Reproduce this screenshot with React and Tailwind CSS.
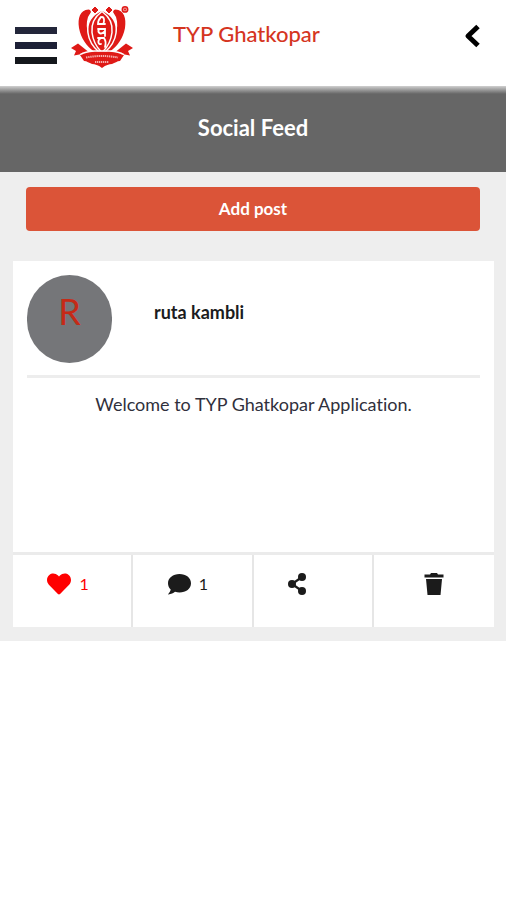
import React, { useState } from 'react';
import { FaHeart } from 'react-icons/fa';

const posts = [
  {
    id: 1,
    author: 'ruta kambli',
    text: 'Welcome to TYP Ghatkopar Application.',
    likes: 1,
    comments: 1,
  },
];

const Logo = () => (
  <svg viewBox="0 0 62 64" className="h-16 w-[62px]" role="img" aria-label="TYP logo">
    {/* side leaves */}
    <path d="M7 38.500L0 43l5 3-2 4.500 8-1.500h40l8 1.500-2-4.500 5-3-7-4.500-10 8H17z" fill="#df1a17" />
    {/* outer petals */}
    <g fill="#df1a17">
      <path d="M17.500 4.500C9 5 6.500 13 8 23c2 10 7 18 16 24l4-1C19 37 13 24 17 12c1-2 2-3 3-5-.5-1.500-1-2.500-2.500-2.500z" />
      <path d="M44.500 4.500C53 5 55.500 13 54 23c-2 10-7 18-16 24l-4-1c9-9 15-22 11-34-1-2-2-3-3-5 .5-1.500 1-2.500 2.500-2.500z" />
    </g>
    {/* inner petals and bud */}
    <path d="M31 5C20 10 15.500 18 17 28c1 8 5 14 11 19h6c6-5 10-11 11-19 1.500-10-3-18-14-23z" fill="#df1a17" stroke="#fff" strokeWidth="1.500" />
    <path d="M31 6.500c-7 5-11 12-10 21 1 8 4 14 9 19h2c5-5 8-11 9-19 1-9-3-16-10-21z" fill="#df1a17" stroke="#fff" strokeWidth="1.500" />
    <path d="M24 2l3 3-3 3-3-3zM38 2l3 3-3 3-3-3z" fill="#df1a17" stroke="#df1a17" />
    {/* ribbon */}
    <path d="M9 50c14-5 30-5 44 0l-4 6c-3 0-5 2-8 3-3 0-6 1-10 4-4-3-7-4-10-4-3-1-5-3-8-3z" fill="#df1a17" />
    <path d="M9 49.500c4-2 9-3 14-3.500h16c5 .5 10 1.500 14 3.500" fill="none" stroke="#fff" strokeWidth="1.300" />
    <path
      d="M30 12c-2 2-3 4-3 7h7M31 12c2 0 3 4 1 7M27 24h7v7M28 24c-2 4 2 6 5 3M27 33h6c2 3 2 6 1 9M30 33c-4 2-3 7 0 6"
      fill="none"
      stroke="#fff"
      strokeWidth="1.800"
      strokeLinecap="round"
    />
    <path d="M15 52.500c11-2 21-2 32 0" fill="none" stroke="#fff" strokeWidth="2" strokeDasharray="1.4 .7" opacity=".65" />
    <path d="M24 57h14" stroke="#fff" strokeWidth="2" strokeDasharray="1.3 .7" opacity=".65" />
    <circle cx="54" cy="4.400" r="2.700" fill="#f3a09f" stroke="#df1a17" strokeWidth="1.500" />
    <circle cx="54" cy="4.400" r="1" fill="#df1a17" />
  </svg>
);

const BackIcon = () => (
  <svg viewBox="0 0 16 24" className="h-6 w-4" fill="none" stroke="#000" strokeWidth="5">
    <path d="M14 2.500L4 12l10 9.500" strokeLinejoin="round" />
  </svg>
);

const CommentIcon = () => (
  <svg viewBox="0 0 24 24" className="size-6" fill="currentColor">
    <path d="M12.500 2C6 2 1 6 1 11.200c0 2.400 1 4.600 2.700 6.200-.3 1.700-1.300 3-2.700 5 3 .1 5.300-1.400 7-2.600 1.400.5 3 .7 4.500.7 6.500 0 11.500-4 11.500-9.300S19 2 12.500 2z" />
  </svg>
);

const ShareIcon = () => (
  <svg viewBox="0 0 20 24" className="h-6 w-5" fill="currentColor">
    <circle cx="15" cy="5" r="4" />
    <circle cx="5" cy="12" r="4" />
    <circle cx="15" cy="19" r="4" />
    <path d="M15 5L5 12l10 7" fill="none" stroke="currentColor" strokeWidth="2.200" />
  </svg>
);

const TrashIcon = () => (
  <svg viewBox="0 0 20 24" className="h-6 w-5" fill="currentColor">
    <path d="M7 1h6l1 1.500h5.500v3H.5v-3H6z" />
    <path d="M2 7h16l-1.500 16h-13z" />
  </svg>
);

const Header = () => (
  <header className="flex h-[86px] items-start bg-white pl-[15px] pr-[26px]">
    <button aria-label="Menu" className="mt-[27px] flex w-[42px] flex-col gap-2">
      <span className="h-[7px] w-full bg-[#23263a]" />
      <span className="h-[7px] w-full bg-[#1d2036]" />
      <span className="h-[7px] w-full bg-[#14171c]" />
    </button>
    <a href="#home" className="ml-[14px] mt-[5px]">
      <Logo />
    </a>
    <h1 className="ml-10 mt-5 flex-1 text-[22px] leading-7 font-medium text-[#d5351f]">TYP Ghatkopar</h1>
    <button aria-label="Back" className="mt-6">
      <BackIcon />
    </button>
  </header>
);

const Post = ({ post }) => {
  const [liked, setLiked] = useState(true);
  const likes = liked ? post.likes : post.likes - 1;

  return (
    <article className="ml-[13px] mr-3 bg-white">
      <div className="mx-[14px] flex h-[117px] items-start border-b-3 border-[#ededed] pt-[14px]">
        <div className="flex h-[88px] w-[85px] justify-center rounded-full bg-[#757679] pt-4 text-4xl text-[#c52a17]">
          R
        </div>
        <h3 className="ml-[42px] mt-[25px] text-lg leading-6 font-bold text-[#1b1c20]">{post.author}</h3>
      </div>
      <p className="h-[174px] px-4 pt-[14px] text-center text-lg leading-6 text-[#30303c]">{post.text}</p>
      <div className="grid h-[75px] grid-cols-4 divide-x-2 divide-[#e6e6e6] border-t-3 border-[#ebebeb] text-base text-[#1b1b1b]">
        <button
          aria-label="Like"
          onClick={() => setLiked(!liked)}
          className="flex items-start justify-center gap-2 pr-2 pt-[17px] text-[#ff0000]"
        >
          <FaHeart className="size-6" />
          <span>{likes}</span>
        </button>
        <button aria-label="Comment" className="flex items-start justify-center gap-2 pr-[10px] pt-[17px]">
          <CommentIcon />
          <span>{post.comments}</span>
        </button>
        <button aria-label="Share" className="flex items-start justify-center pr-8 pt-[17px]">
          <ShareIcon />
        </button>
        <button aria-label="Delete" className="flex items-start justify-center pt-[17px]">
          <TrashIcon />
        </button>
      </div>
    </article>
  );
};

const App = () => {
  return (
    <div className="min-h-screen bg-white font-['Lato',sans-serif] [font-variant-ligatures:none]">
      <Header />
      <main className="bg-[#eeeeee] pb-[14px]">
        <div className="h-[86px] bg-[#666666]">
          <div className="h-2 bg-linear-to-b from-[#d0d0d0] to-[#666666]" />
          <h2 className="pt-5 text-center text-[22px] leading-7 font-bold text-white">Social Feed</h2>
        </div>
        <div className="px-[26px] pb-[30px] pt-[15px]">
          <button className="h-11 w-full rounded bg-[#db5438] text-[17px] font-bold text-white">Add post</button>
        </div>
        {posts.map((post) => (
          <Post key={post.id} post={post} />
        ))}
      </main>
    </div>
  );
};

export default App;
